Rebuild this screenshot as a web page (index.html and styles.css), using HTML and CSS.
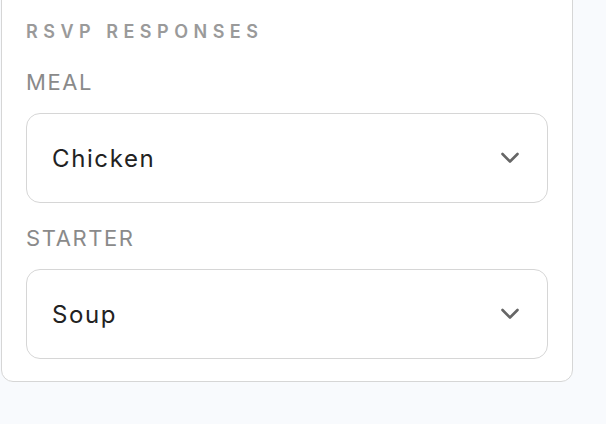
FILE: index.html
```html
<!DOCTYPE html>
<html lang="en">
<head>
  <meta charset="UTF-8" />
  <title>RSVP Responses</title>
  <link rel="stylesheet" href="styles.css">
</head>
<body>
<div class="card">
  <h2 class="card-title">RSVP RESPONSES</h2>

  <div class="field">
    <label class="field-label">MEAL</label>
    <div class="select">
      <span class="select-value">Chicken</span>
      <svg class="chevron" width="20" height="12" viewBox="0 0 20 12">
        <path d="M2.5 2 L10 9.5 L17.5 2" fill="none" stroke="#666" stroke-width="2.6" stroke-linecap="round" stroke-linejoin="round"/>
      </svg>
    </div>
  </div>

  <div class="field">
    <label class="field-label">STARTER</label>
    <div class="select">
      <span class="select-value">Soup</span>
      <svg class="chevron" width="20" height="12" viewBox="0 0 20 12">
        <path d="M2.5 2 L10 9.5 L17.5 2" fill="none" stroke="#666" stroke-width="2.6" stroke-linecap="round" stroke-linejoin="round"/>
      </svg>
    </div>
  </div>
</div>
</body>
</html>
```

FILE: styles.css
```css
body {
  font-family: Inter, "Noto Sans", sans-serif;
  background: #f8fafd;
  margin: 0;
  padding: 0;
}
.card {
  display: flex;
  flex-direction: column;
  width: 522px;
  margin: -5px 0 0 1px;
  padding: 24px 24px 22px 24px;
  background: #fff;
  border: 1px solid #d6d6d6;
  border-radius: 0 0 12px 12px;
}
.card-title {
  margin: 0 0 3px;
  font-size: 18px;
  line-height: 24px;
  font-weight: 600;
  letter-spacing: 5.5px;
  color: #9a9a9a;
}
.field {
  margin-top: 22px;
}
.field-label {
  display: block;
  margin-bottom: 18px;
  font-size: 22px;
  line-height: 26px;
  letter-spacing: 1.6px;
  color: #8a8a8a;
}
.select {
  display: flex;
  align-items: center;
  justify-content: space-between;
  height: 88px;
  padding: 0 27px 0 25px;
  border: 1px solid #d6d6d6;
  border-radius: 14px;
  background: #fff;
}
.select-value {
  font-size: 24px;
  letter-spacing: 1.6px;
  color: #222;
}
.chevron {
  display: block;
}
```
